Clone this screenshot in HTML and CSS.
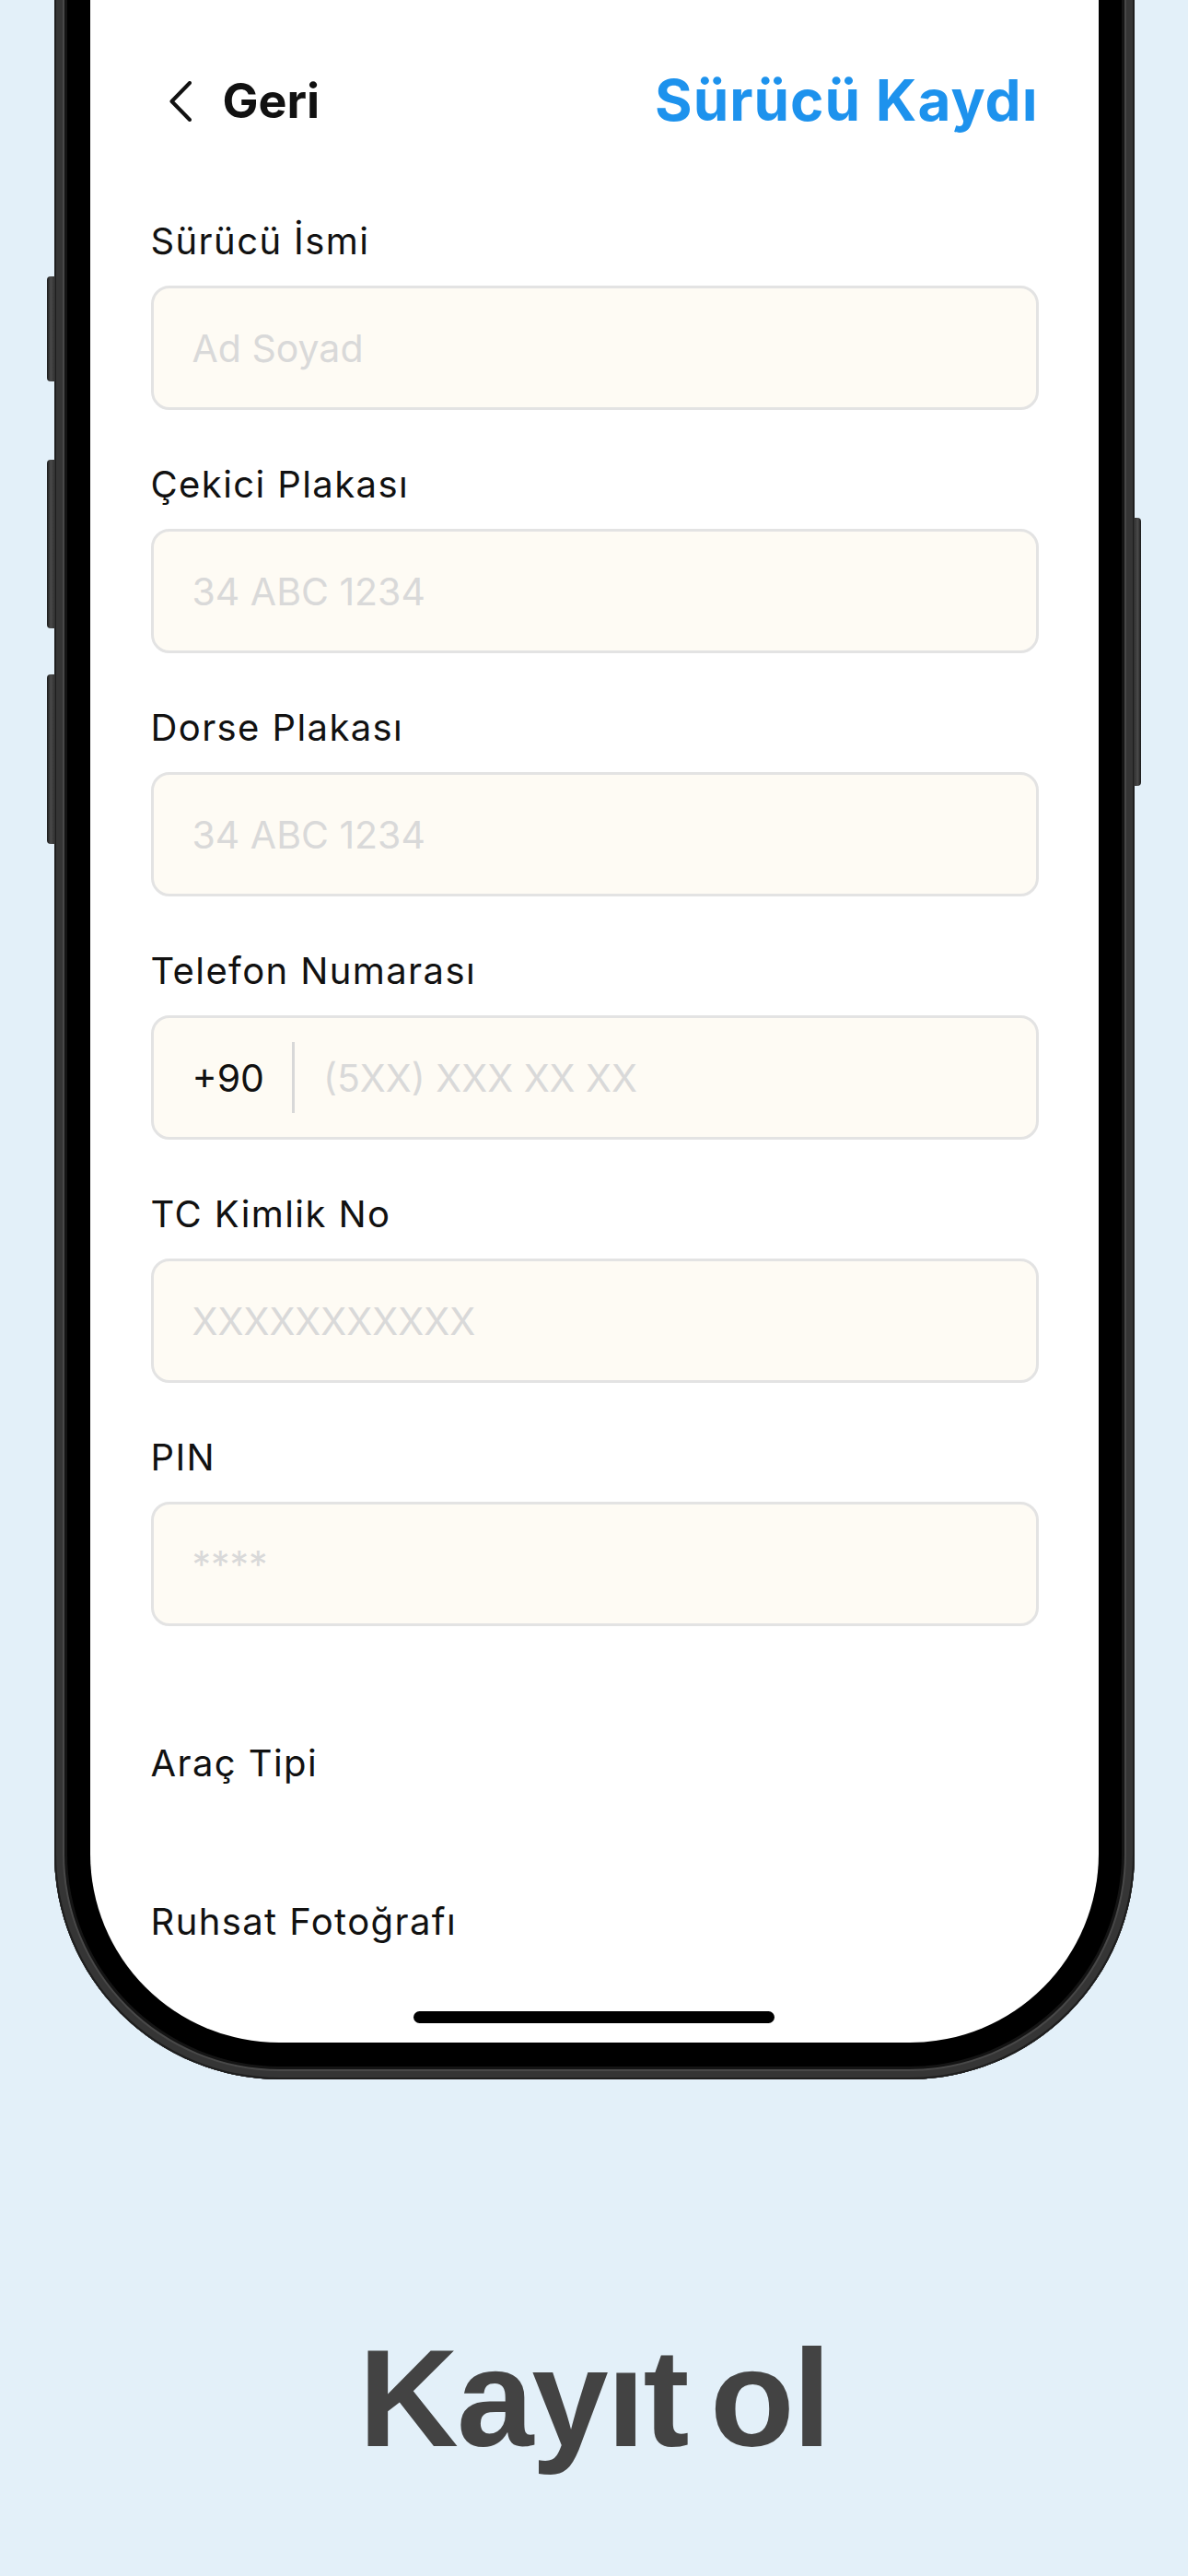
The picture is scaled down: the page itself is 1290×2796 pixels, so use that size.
FILE: index.html
```html
<!DOCTYPE html>
<html lang="tr">
<head>
<meta charset="utf-8">
<title>Sürücü Kaydı</title>
<link rel="stylesheet" href="styles.css">
</head>
<body>
<div class="stage">
  <div class="phone">
    <span class="side-btn side-l1"></span>
    <span class="side-btn side-l2"></span>
    <span class="side-btn side-l3"></span>
    <span class="side-btn side-r1"></span>
    <div class="screen">
      <header class="topbar">
        <div class="back">
          <svg class="chev" width="24" height="44" viewBox="0 0 24 44"><path d="M22 2 L2.5 22 L22 42" fill="none" stroke="#111" stroke-width="4" stroke-linecap="round" stroke-linejoin="round"/></svg>
          <span class="back-text">Geri</span>
        </div>
        <h1 class="title">Sürücü Kaydı</h1>
      </header>
      <div class="form">
        <div class="field">
          <div class="label">Sürücü İsmi</div>
          <div class="input"><span class="ph">Ad Soyad</span></div>
        </div>
        <div class="field">
          <div class="label">Çekici Plakası</div>
          <div class="input"><span class="ph">34 ABC 1234</span></div>
        </div>
        <div class="field">
          <div class="label">Dorse Plakası</div>
          <div class="input"><span class="ph">34 ABC 1234</span></div>
        </div>
        <div class="field">
          <div class="label">Telefon Numarası</div>
          <div class="input"><span class="prefix">+90</span><span class="divider"></span><span class="ph">(5XX) XXX XX XX</span></div>
        </div>
        <div class="field">
          <div class="label">TC Kimlik No</div>
          <div class="input"><span class="ph">XXXXXXXXXXX</span></div>
        </div>
        <div class="field field-last">
          <div class="label">PIN</div>
          <div class="input"><span class="ph">****</span></div>
        </div>
        <div class="section-label">Araç Tipi</div>
        <div class="section-label">Ruhsat Fotoğrafı</div>
      </div>
      <div class="home"></div>
    </div>
  </div>
  <p class="caption">Kayıt ol</p>
</div>
</body>
</html>
```

FILE: styles.css
```css
* { box-sizing: border-box; }
html, body {
  margin: 0;
  padding: 0;
}
body {
  background: #e3f0f9;
  width: 1290px;
  height: 2796px;
  overflow: hidden;
  font-family: "Inter", "Noto Sans", sans-serif;
}
.stage {
  width: 1290px;
  display: flex;
  flex-direction: column;
  align-items: center;
}
.phone {
  position: relative;
  width: 1173px;
  margin-top: -80px;
  padding: 40px 39px 40px 39px;
  background: #000;
  border-radius: 0 0 245px 245px;
  box-shadow:
    inset 0 0 0 2px #1e1e1e,
    inset 0 0 0 9px #353535,
    inset 0 0 0 11px #484848,
    inset 0 0 0 14px #141414;
}
.side-btn {
  position: absolute;
  background: linear-gradient(90deg, #1a1a1a 0%, #4a4a4a 45%, #2e2e2e 100%);
}
.side-l1, .side-l2, .side-l3 {
  left: -8px;
  width: 9px;
  border-radius: 4px 0 0 4px;
}
.side-l1 { top: 380px; height: 114px; }
.side-l2 { top: 579px; height: 183px; }
.side-l3 { top: 812px; height: 184px; }
.side-r1 {
  right: -7px;
  width: 8px;
  top: 642px;
  height: 291px;
  border-radius: 0 4px 4px 0;
  background: linear-gradient(90deg, #2e2e2e 0%, #4a4a4a 55%, #1a1a1a 100%);
}
.screen {
  position: relative;
  height: 2257px;
  background: #fff;
  border-radius: 0 0 205px 205px;
  overflow: hidden;
  padding: 118px 65px 0 66px;
}
.topbar {
  display: flex;
  justify-content: space-between;
  align-items: flex-start;
}
.back {
  display: flex;
  align-items: center;
  height: 52px;
  margin-top: 6px;
  margin-left: 20px;
  gap: 34px;
}
.chev { display: block; }
.back-text {
  font-size: 52px;
  line-height: 52px;
  font-weight: 700;
  color: #111;
}
.title {
  margin: 0;
  font-size: 62px;
  line-height: 62px;
  font-weight: 700;
  color: #1d92ed;
  letter-spacing: 1px;
}
.form {
  margin-top: 99px;
  display: flex;
  flex-direction: column;
}
.field {
  display: flex;
  flex-direction: column;
  margin-bottom: 58px;
}
.field-last { margin-bottom: 0; }
.label, .section-label {
  font-size: 40px;
  line-height: 46px;
  color: #111;
  letter-spacing: 0.035em;
}
.label { margin-bottom: 25px; }
.section-label { margin-top: 126px; }
.input {
  height: 135px;
  border: 3px solid #e3e3e3;
  border-radius: 20px;
  background: #fefbf4;
  display: flex;
  align-items: center;
  padding-left: 42px;
  font-size: 41px;
}
.ph { color: #d9d9d9; }
.prefix { color: #111; }
.divider {
  width: 3px;
  height: 77px;
  background: #d8d8d8;
  margin: 0 31px 0 30px;
}
.home {
  position: absolute;
  bottom: 21px;
  left: 50%;
  width: 392px;
  height: 13px;
  margin-left: -196px;
  border-radius: 7px;
  background: #000;
}
.caption {
  margin: 271px 0 0 0;
  font-family: "Liberation Sans", Arial, sans-serif;
  font-weight: 700;
  font-size: 150px;
  line-height: 150px;
  letter-spacing: -2px;
  word-spacing: -15px;
  color: #434343;
  text-align: center;
}
```
